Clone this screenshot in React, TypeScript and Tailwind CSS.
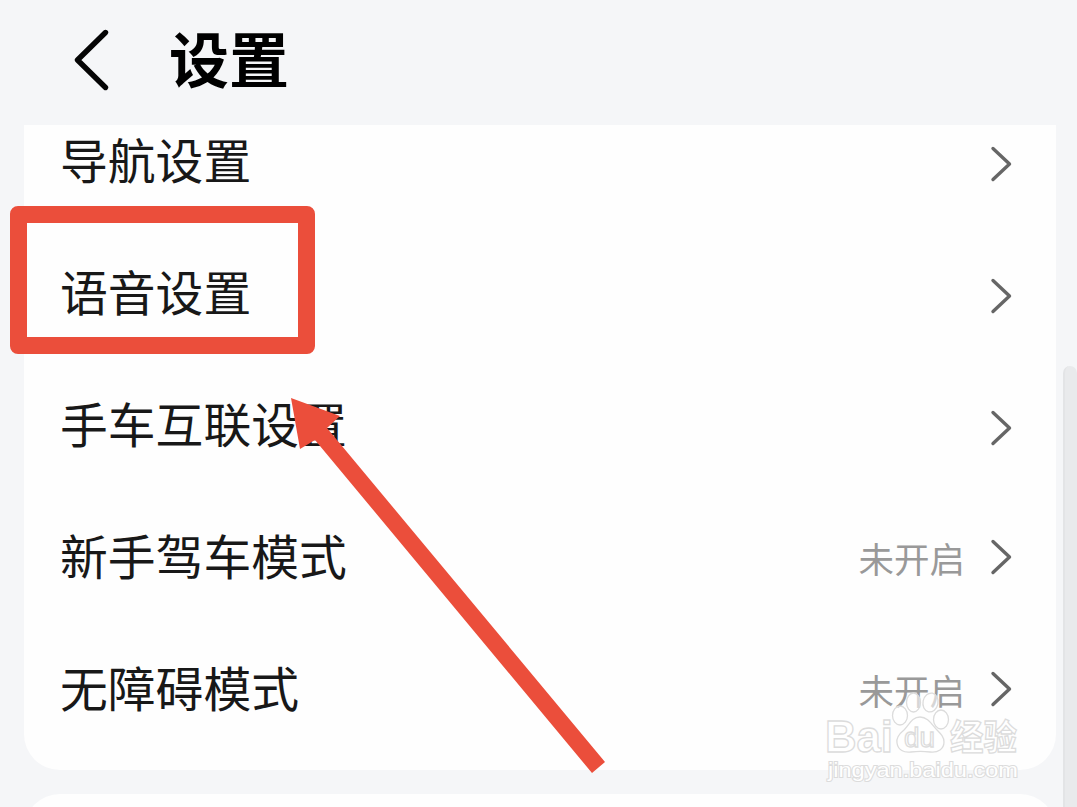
type SettingItem = {
  label: string;
  status?: string;
};

const settings: SettingItem[] = [
  { label: '导航设置' },
  { label: '语音设置' },
  { label: '手车互联设置' },
  { label: '新手驾车模式', status: '未开启' },
  { label: '无障碍模式', status: '未开启' },
];

function SettingRow({ label, status }: SettingItem) {
  return (
    <div className="flex h-[132px] shrink-0 items-center justify-between pr-[43px] pl-[36px]">
      <span className="pb-[10px] text-[47.8px] leading-[60px] text-[#181818]">{label}</span>
      <div className="flex items-center gap-[25px]">
        {status && <span className="pb-[4px] text-[35.5px] leading-[48px] text-[#999999]">{status}</span>}
        <svg
          className={status ? 'mb-[7px] h-[36px] w-[23px]' : 'h-[36px] w-[23px]'}
          viewBox="0 0 23 36"
          fill="none"
          stroke="#666666"
          strokeWidth="3.4"
          strokeLinecap="round"
          strokeLinejoin="round"
        >
          <path d="M3 2.5 19.5 18 3 33.5" />
        </svg>
      </div>
    </div>
  );
}

function Watermark() {
  return (
    <svg
      className="absolute top-[688px] left-[820px] h-[100px] w-[210px]"
      viewBox="820 688 210 100"
      fontFamily="'Liberation Sans', 'Noto Sans CJK SC', sans-serif"
      fontWeight="700"
      fill="#ffffff"
      stroke="#dcdcdc"
      strokeWidth="1.3"
    >
      <text x="825" y="751.5" fontSize="44.5" textLength="68" lengthAdjust="spacingAndGlyphs">Bai</text>
      <g fillOpacity="0.6">
        <ellipse cx="900" cy="715.5" rx="7.5" ry="9.5" />
        <ellipse cx="913.5" cy="702.5" rx="7" ry="9.5" />
        <ellipse cx="930.5" cy="702.5" rx="7.5" ry="9.5" transform="rotate(12 930.5 702.5)" />
        <ellipse cx="941" cy="719.5" rx="7.5" ry="9.5" />
      </g>
      <path d="M920 717c-8 0-11 8-16 13-5 4-8 8-7 13 1 7 7 10 14 9 7-1 12-1 19 0 8 1 14-3 14-10 0-5-3-8-7-12-5-5-9-13-17-13z" />
      <text x="904" y="747" fontSize="27" fontWeight="400" textLength="31" lengthAdjust="spacingAndGlyphs">du</text>
      <text x="950" y="749.5" fontSize="35" textLength="67" lengthAdjust="spacingAndGlyphs" fontFamily="'Noto Sans CJK SC', sans-serif">经验</text>
      <text
        x="828"
        y="777"
        fontSize="21"
        fontWeight="400"
        textLength="190"
        lengthAdjust="spacingAndGlyphs"
        paintOrder="stroke"
        strokeWidth="2"
      >
        jingyan.baidu.com
      </text>
    </svg>
  );
}

export default function App() {
  return (
    <div className="relative flex h-[807px] w-[1077px] flex-col overflow-hidden bg-[#f5f6f8] font-['Noto_Sans_CJK_SC',sans-serif]">
      {/* Header */}
      <header className="flex h-[125px] shrink-0 items-start pt-[25px] pl-[70px]">
        <svg
          className="h-[70px] w-[44px]"
          viewBox="0 0 44 70"
          fill="none"
          stroke="#050505"
          strokeWidth="5.4"
          strokeLinecap="round"
          strokeLinejoin="round"
        >
          <path d="M35.5 7.5 7.5 35 35.5 62.5" />
        </svg>
        <h1 className="-mt-[3px] ml-[55px] text-[60px] leading-[70px] font-bold text-black">设置</h1>
      </header>

      {/* The list is scrolled, so the first row is cut by the card's top */}
      <main className="mr-[21px] ml-[24px] flex h-[645px] shrink-0 flex-col overflow-hidden rounded-b-[36px] bg-[#fefefe]">
        <div className="-mt-[27px] flex flex-col">
          {settings.map(item => (
            <SettingRow key={item.label} {...item} />
          ))}
        </div>
      </main>
      <div className="mt-[24px] mr-[21px] ml-[24px] h-[80px] shrink-0 rounded-t-[36px] bg-[#fefefe]" />

      {/* Scrollbar */}
      <div className="absolute top-[366px] left-[1063px] h-[441px] w-[14px] rounded-t-[7px] border-l-2 border-[#e3e4e6] bg-[#e9eaec]" />

      {/* Highlight and arrow */}
      <div className="absolute top-[206px] left-[10px] h-[148px] w-[305px] rounded-[8px] border-[17px] border-[#eb4e3b]" />
      <svg className="absolute top-[390px] left-[280px] h-[390px] w-[330px]" viewBox="280 390 330 390">
        <path d="M291 398 340 416 327 428 605 762 592 773 315 440 300 449z" fill="#eb4e3b" />
      </svg>

      <Watermark />
    </div>
  );
}
